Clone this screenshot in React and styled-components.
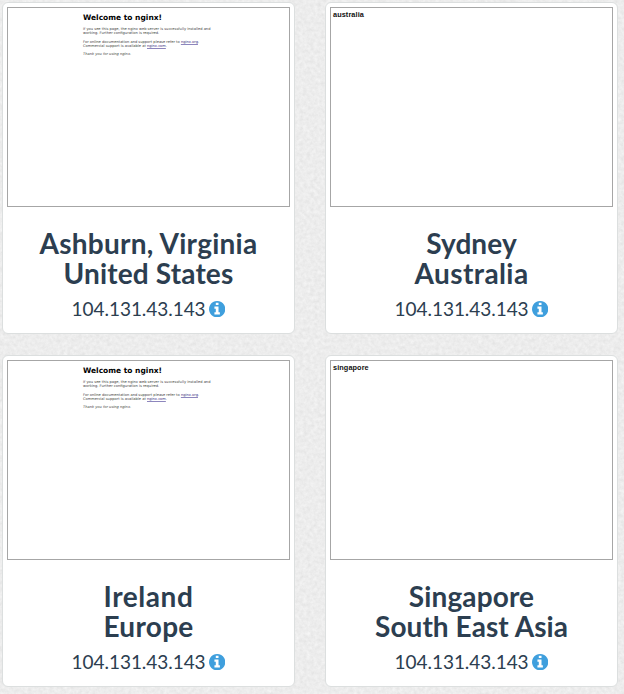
import React from "react";
import styled, { createGlobalStyle } from "styled-components";

const GlobalStyle = createGlobalStyle`
  * { box-sizing: border-box; }
  html, body { margin: 0; padding: 0; background: #ebebeb; overflow: hidden; }
`;

const Page = styled.main`
  position: relative;
  isolation: isolate;
  width: 624px;
  height: 694px;
  padding: 2px 0 0 2px;
  overflow: hidden;
  font-family: Lato, "Liberation Sans", sans-serif;
  color: #2c3e50;
`;

const PaperTexture = styled.svg`
  position: absolute;
  inset: 0;
  z-index: -1;
  width: 100%;
  height: 100%;
`;

const Grid = styled.div`
  display: grid;
  grid-template-columns: 293px 293px;
  grid-auto-rows: 332px;
  column-gap: 30px;
  row-gap: 21px;
`;

const Card = styled.section`
  padding: 4px;
  background: #fff;
  border: 1px solid #dcdfdf;
  border-radius: 6px;
`;

const Preview = styled.div`
  height: 200px;
  border: 1px solid #a6a6a6;
  background: #fff;
  overflow: hidden;
  color: #111;
`;

const NginxPage = styled.div`
  width: 132px;
  margin: 4px 0 0 75px;
  padding-top: 0.6px;
  font-family: "DejaVu Sans", sans-serif;
  font-size: 3.62px;
  line-height: 4.5px;
  white-space: nowrap;
  color: #444;
`;

const NginxTitle = styled.h1`
  margin: 0 0 4.2px;
  font-size: 7.5px;
  line-height: 10px;
  color: #000;
`;

const NginxText = styled.p`
  margin: 0 0 3.8px;
  font-style: ${(p) => (p.$italic ? "italic" : "normal")};
`;

const NginxLink = styled.span`
  color: #3b2f85;
  text-decoration: underline;
  text-decoration-color: #8d86bd;
`;

const HostLabel = styled.div`
  padding: 3px 0 0 2px;
  font: bold 7.3px/8px "Liberation Sans", Arial, sans-serif;
  letter-spacing: 0.1px;
`;

const Place = styled.h3`
  margin: 21px 0 0;
  font-size: 28px;
  font-weight: 700;
  line-height: 30px;
  text-align: center;
`;

const PlaceLine = styled.span`
  display: block;
  letter-spacing: ${(p) => p.$tracking}px;
`;

const Address = styled.div`
  display: flex;
  align-items: center;
  justify-content: center;
  gap: 3.5px;
  margin-top: 9px;
  font-size: 19px;
  line-height: 24px;
  letter-spacing: -0.05px;
`;

const InfoIcon = styled.svg`
  width: 16.3px;
  height: 16.3px;
  fill: #3f9fdd;
`;

const locations = [
  { city: "Ashburn, Virginia", region: "United States", tracking: [0.25, 0.15] },
  { city: "Sydney", region: "Australia", label: "australia", tracking: [0.1, 0.4] },
  { city: "Ireland", region: "Europe", tracking: [0.55, 0.3] },
  { city: "Singapore", region: "South East Asia", label: "singapore", tracking: [0.12, 0.05] },
];

function NginxWelcome() {
  return (
    <NginxPage>
      <NginxTitle>Welcome to nginx!</NginxTitle>
      <NginxText>
        If you see this page, the nginx web server is successfully installed and
        <br />
        working. Further configuration is required.
      </NginxText>
      <NginxText>
        For online documentation and support please refer to <NginxLink>nginx.org</NginxLink>.
        <br />
        Commercial support is available at <NginxLink>nginx.com</NginxLink>.
      </NginxText>
      <NginxText $italic>Thank you for using nginx.</NginxText>
    </NginxPage>
  );
}

function LocationCard({ city, region, label, tracking }) {
  return (
    <Card>
      <Preview>{label ? <HostLabel>{label}</HostLabel> : <NginxWelcome />}</Preview>
      <Place>
        <PlaceLine $tracking={tracking[0]}>{city}</PlaceLine>
        <PlaceLine $tracking={tracking[1]}>{region}</PlaceLine>
      </Place>
      <Address>
        104.131.43.143
        <InfoIcon viewBox="0 0 1536 1536" aria-hidden="true">
          <path d="M1024 1248v-160q0-14-9-23t-23-9h-96v-512q0-14-9-23t-23-9h-320q-14 0-23 9t-9 23v160q0 14 9 23t23 9h96v320h-96q-14 0-23 9t-9 23v160q0 14 9 23t23 9h448q14 0 23-9t9-23zm-128-896v-160q0-14-9-23t-23-9h-192q-14 0-23 9t-9 23v160q0 14 9 23t23 9h192q14 0 23-9t9-23zm640 416q0 209-103 385.5t-279.5 279.5-385.5 103-385.5-103-279.5-279.5-103-385.5 103-385.5 279.5-279.5 385.5-103 385.5 103 279.5 279.5 103 385.5z" />
        </InfoIcon>
      </Address>
    </Card>
  );
}

export default function App() {
  return (
    <Page>
      <GlobalStyle />
      <PaperTexture aria-hidden="true">
        <filter id="paper" x="0" y="0" width="100%" height="100%" colorInterpolationFilters="sRGB">
          <feTurbulence type="fractalNoise" baseFrequency="0.28" numOctaves="3" seed="7" />
          <feColorMatrix values="0.08 0.03 0 0 0.872  0.08 0.03 0 0 0.872  0.08 0.03 0 0 0.872  0 0 0 0 1" />
        </filter>
        <rect width="100%" height="100%" filter="url(#paper)" />
      </PaperTexture>
      <Grid>
        {locations.map((location) => (
          <LocationCard key={location.city} {...location} />
        ))}
      </Grid>
    </Page>
  );
}
